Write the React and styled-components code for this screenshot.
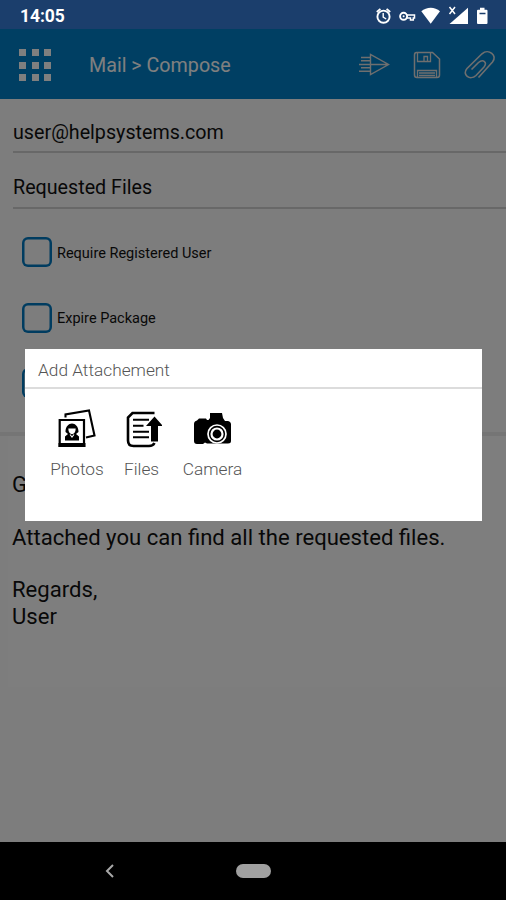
import React from 'react';
import styled, { createGlobalStyle } from 'styled-components';

const GlobalStyle = createGlobalStyle`
	* {
		box-sizing: border-box;
	}
	body {
		margin: 0;
		background: #000;
		font-family: Roboto, sans-serif;
	}
	svg {
		display: block;
		flex: none;
	}
`

const Phone = styled.div`
	display: flex;
	flex-direction: column;
	width: 506px;
	height: 900px;
	overflow: hidden;
`

const StatusBar = styled.div`
	display: flex;
	align-items: center;
	justify-content: space-between;
	height: 29px;
	padding: 3px 16px 0 20px;
	background: #1b3e6c;
	color: #fff;
`

const Clock = styled.span`
	font-size: 17.5px;
	font-weight: 700;
	line-height: 26px;
	letter-spacing: -0.1px;
`

const Screen = styled.div`
	position: relative;
	display: flex;
	flex-direction: column;
	height: 813px;
	overflow: hidden;
	background: #fafafa;
`

const Header = styled.div`
	display: flex;
	align-items: center;
	height: 70px;
	padding: 2px 10px 0 19px;
	background: #007fc6;
	color: #fff;
`

const MenuGrid = styled.div`
	display: grid;
	grid-template-columns: repeat(3, 7px);
	grid-auto-rows: 7px;
	gap: 5.5px;
`

const Dot = styled.span`
	background: #fff;
`

const Title = styled.span`
	flex: 1;
	margin-left: 38px;
	font-size: 19.7px;
`

const Actions = styled.div`
	display: flex;
	align-items: center;
	gap: 23px;
`

const Field = styled.div`
	height: ${props => props.$height}px;
	margin-left: 13px;
	padding-top: ${props => props.$top}px;
	border-bottom: 2px solid #d0d0d0;
	font-size: 19.7px;
	line-height: 24px;
	color: #111;
`

const Options = styled.div`
	display: flex;
	flex-direction: column;
	gap: 35px;
	height: 227px;
	padding: 28px 0 0 21.5px;
	border-bottom: 4px solid #eaeaea;
`

const Option = styled.label`
	display: flex;
	align-items: center;
	gap: 5.5px;
	height: 30.5px;
	font-size: 14.5px;
	line-height: 18px;
	color: #111;
`

const OptionText = styled.span`
	padding-top: 2.5px;
`

const Box = styled.span`
	width: 30px;
	height: 30px;
	border-radius: 6px;
	box-shadow: inset 0 0 0 2.5px #0078c0;
`

const Message = styled.div`
	height: 251px;
	margin-left: 8px;
	padding: 35.3px 0 0 4px;
	background: #fdfdfd;
	font-size: 22.1px;
	line-height: 26.3px;
	color: #111;
`

const Line = styled.p`
	width: fit-content;
	height: 26.3px;
	margin: 0;
`

const Overlay = styled.div`
	position: absolute;
	inset: 0;
	padding: 320px 24px 0 25px;
	background: rgba(0, 0, 0, 0.5);
`

const Dialog = styled.div`
	height: 172px;
	background: #fff;
	color: #555;
	font-weight: 300;
`

const DialogTitle = styled.div`
	height: 40px;
	padding: 9px 0 0 13px;
	border-bottom: 2px solid #dcdcdc;
	font-size: 17.3px;
	line-height: 24px;
`

const Choices = styled.div`
	display: flex;
	gap: 19px;
	padding: 19px 0 0 25px;
`

const Choice = styled.div`
	display: flex;
	flex-direction: column;
	align-items: center;
	width: ${props => props.$width}px;
	font-size: 17.3px;
	line-height: 24px;
	white-space: nowrap;
`

const ChoiceLabel = styled.span`
	margin-top: 9px;
`

const NavBar = styled.div`
	display: flex;
	align-items: center;
	height: 58px;
	padding: 0 0 0 105px;
	background: #000;
`

const HomePill = styled.span`
	width: 35px;
	height: 14px;
	margin-left: 122px;
	border-radius: 7px;
	background: #a0a0a0;
`

const StatusIcons = () => (
	<svg width='114' height='24' viewBox='376 3 114 24' fill='none' stroke='#fff'>
		<circle cx='383.5' cy='15.7' r='6.1' strokeWidth='1.9' />
		<path d='M376.8 11l3.6-3.2M390.2 11l-3.6-3.2' strokeWidth='1.8' />
		<path d='M383.2 12v4.2l3 1.8' strokeWidth='1.4' />
		<circle cx='403.6' cy='15.3' r='3.5' strokeWidth='1.9' />
		<circle cx='403.6' cy='15.3' r='1' fill='#fff' stroke='none' />
		<path d='M407 14h7.5v3h-1.2v2h-2.8v-2h-3.5' strokeWidth='1.5' />
		<path d='M421.3 10.3C426.5 5.6 435 5.6 440 10.3L430.7 22.8Z' fill='#fff' stroke='none' />
		<path d='M449.5 23L468 6.8V23Z' fill='#fff' stroke='none' />
		<path d='M449.5 6l5.5 7M455 6l-5.5 7' strokeWidth='1.5' />
		<path d='M480 6.7h4.5v2h2q1 0 1 1V22q0 1-1 1h-8.5q-1 0-1-1V9.7q0-1 1-1h2z' fill='#fff' stroke='none' />
		<path d='M479.5 12.5h6' stroke='#1b3e6c' strokeWidth='1.5' />
	</svg>
)

const SendIcon = () => (
	<svg width='31' height='26' viewBox='0 0 31 26' fill='none' stroke='#dedede' strokeWidth='1.4'>
		<path d='M11.5 2.5V22.5L29.5 12.5ZM0 12.5H29M2 5.5h9M2 8.8h9M2 15.8h9M0 19.2h11' />
	</svg>
)

const SaveIcon = () => (
	<svg width='28' height='28' viewBox='0 0 28 28' fill='none' stroke='#dedede' strokeWidth='1.5'>
		<path d='M3.5 1.5H19.5L26.5 8V24q0 2.5-2.5 2.5H4q-2.5 0-2.5-2.5V4Q1.5 1.5 3.5 1.5Z' />
		<path d='M4.5 2v8.5h13V2M11 10V5.5h3.5V10M4.5 26v-6.5h19V26M6 22h16M6 24.5h16' strokeWidth='1.3' />
	</svg>
)

const ClipIcon = () => (
	<svg width='32' height='30' viewBox='0 0 32 30' fill='none' stroke='#dedede' strokeWidth='1.6'>
		<path d='M7.5 19.5L14.5 12.5C19 8.5 24 12.5 20 17L12 25.5C6 31 -2.5 24.5 3 18.5L18 3.8C24.5 -2 34 5.5 28.5 12L14.5 27.5' />
	</svg>
)

const PhotosIcon = () => (
	<svg width='40' height='40' viewBox='57.5 408 40 40' fill='none' stroke='#000'>
		<path d='M66 417.5V414.5L89.5 410.5L95 435.5L86.5 437.5' strokeWidth='2.1' />
		<path d='M60.2 420H84.5V446H60.2Z' strokeWidth='2.2' fill='#fff' />
		<path d='M59 443H86V447H59Z' fill='#000' stroke='none' />
		<path d='M66 432C66 420.5 79 420.5 79 432L76.5 434L79.5 436.5V440.5H65.5V436.5L68.5 434Z' fill='#000' stroke='none' />
		<path d='M68.8 428.5H76.2C76.2 436 68.8 436 68.8 428.5Z' fill='#fff' stroke='none' />
		<path d='M70.5 434.5L72.5 437L74.5 434.5' stroke='#fff' strokeWidth='1.1' />
	</svg>
)

const FilesIcon = () => (
	<svg width='40' height='40' viewBox='122 408 40 40' fill='none' stroke='#000'>
		<path d='M154.5 413H132.5L128 417.5V440.5Q128 446 133.5 446H149Q153 446 154.5 443' strokeWidth='2.6' />
		<path d='M133 419.8H149M133 425.7H143.5M133 431.7H149M133 437.2H149' strokeWidth='2.1' />
		<path d='M154.5 416.5L163 426H158V441.5H151V426H146Z' fill='#000' stroke='none' />
	</svg>
)

const CameraIcon = () => (
	<svg width='40' height='40' viewBox='193 408 40 40'>
		<path d='M194 424Q194 421 197 420.5L199 418.5H206L207 420H208.5L210 418V413H222L223 418L225 421H228Q231 421.5 231 424.5V441Q231 443.5 228 443.5H207L205 442.5L203 444H197Q194 444 194 441Z' fill='#000' />
		<circle cx='217' cy='434' r='9' fill='#000' stroke='#fff' strokeWidth='1.7' />
		<circle cx='217' cy='434' r='5.5' fill='#000' stroke='#fff' strokeWidth='2.2' />
	</svg>
)

const BackIcon = () => (
	<svg width='9' height='14' viewBox='0 0 9 14' fill='none' stroke='#a8a8a8' strokeWidth='2'>
		<path d='M8 1L2 7L8 13' />
	</svg>
)

const AttachmentDialog = () => (
	<Overlay>
		<Dialog>
			<DialogTitle>Add Attachement</DialogTitle>
			<Choices>
				<Choice $width={54}>
					<PhotosIcon />
					<ChoiceLabel>Photos</ChoiceLabel>
				</Choice>
				<Choice $width={37}>
					<FilesIcon />
					<ChoiceLabel>Files</ChoiceLabel>
				</Choice>
				<Choice $width={67}>
					<CameraIcon />
					<ChoiceLabel>Camera</ChoiceLabel>
				</Choice>
			</Choices>
		</Dialog>
	</Overlay>
)

const message = [
	'G',
	'',
	'Attached you can find all the requested files.',
	'',
	'Regards,',
	'User',
];

const App = () => {
	return (
		<>
			<GlobalStyle />
			<Phone>
				<StatusBar>
					<Clock>14:05</Clock>
					<StatusIcons />
				</StatusBar>
				<Screen>
					<Header>
						<MenuGrid>
							{[...Array(9)].map((_, i) => <Dot key={i} />)}
						</MenuGrid>
						<Title>Mail &gt; Compose</Title>
						<Actions>
							<SendIcon />
							<SaveIcon />
							<ClipIcon />
						</Actions>
					</Header>
					<Field $height={54} $top={22}>user@helpsystems.com</Field>
					<Field $height={56} $top={23}>Requested Files</Field>
					<Options>
						<Option><Box /><OptionText>Require Registered User</OptionText></Option>
						<Option><Box /><OptionText>Expire Package</OptionText></Option>
						<Option><Box /></Option>
					</Options>
					<Message>
						{message.map((line, i) => <Line key={i}>{line}</Line>)}
					</Message>
					<AttachmentDialog />
				</Screen>
				<NavBar>
					<BackIcon />
					<HomePill />
				</NavBar>
			</Phone>
		</>
	);
}

export default App;
